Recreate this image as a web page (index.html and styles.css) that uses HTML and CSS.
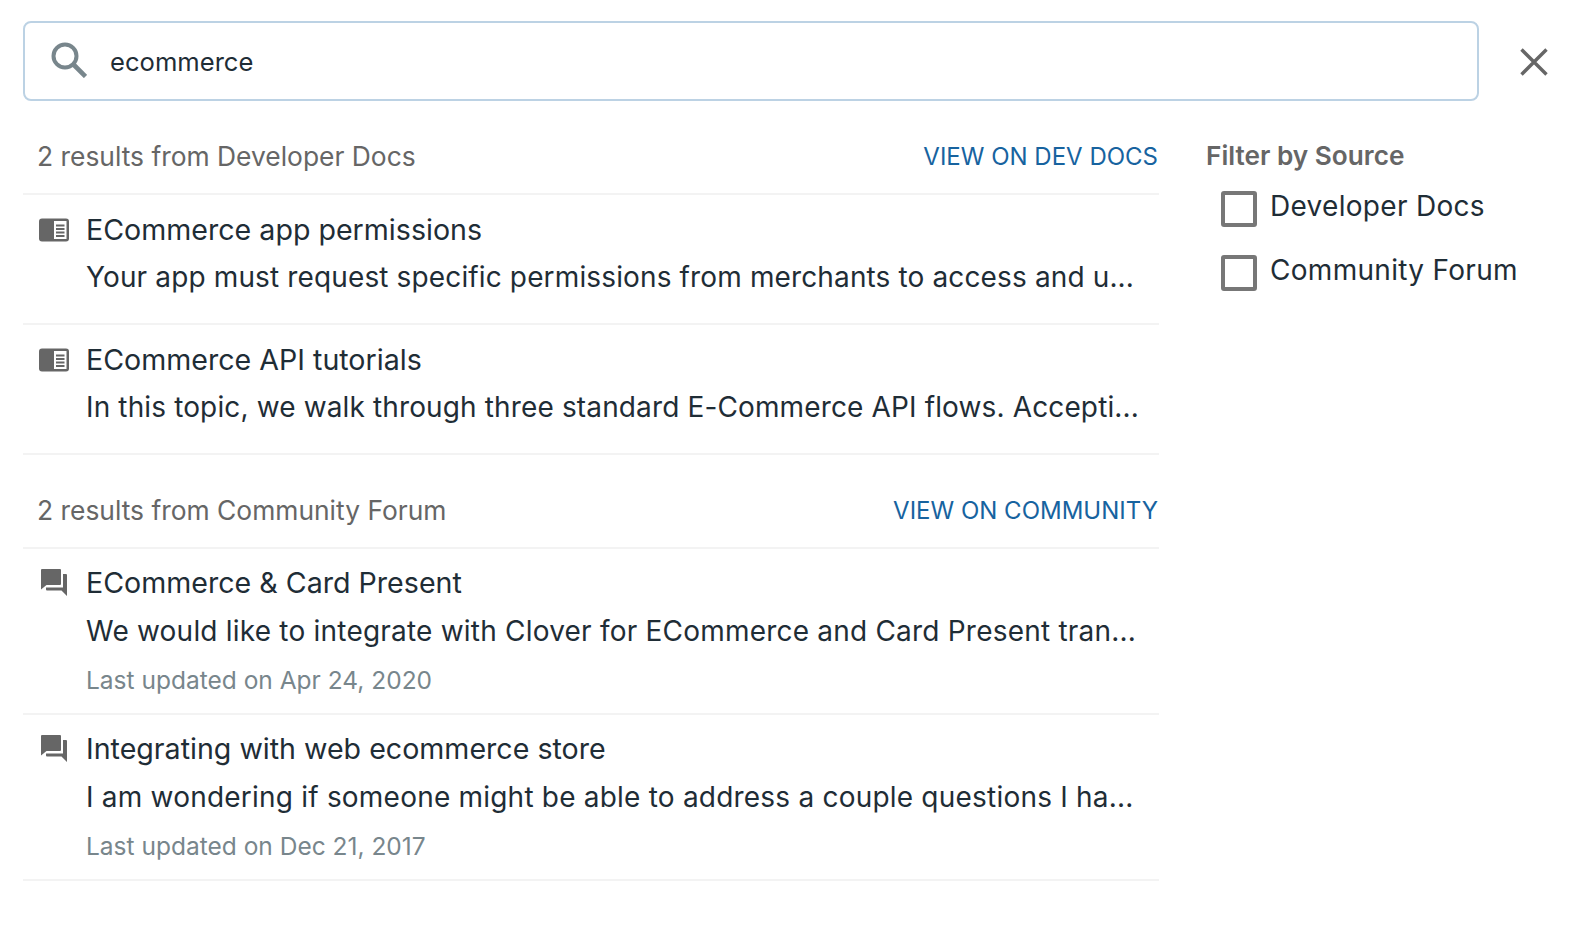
FILE: index.html
```html
<!DOCTYPE html>
<html lang="en">
<head>
<meta charset="utf-8">
<title>Search</title>
<link rel="stylesheet" href="styles.css">
</head>
<body>
<div class="page">
  <div class="top">
    <div class="search">
      <svg class="search-icon" viewBox="0 0 36 36"><circle cx="14" cy="14" r="11.5" fill="none" stroke="#78868c" stroke-width="4"/><path d="M22.5 22.5 L34.5 34.5" stroke="#78868c" stroke-width="4.6" fill="none"/></svg>
      <span class="query">ecommerce</span>
    </div>
    <svg class="close" viewBox="0 0 28 28"><path d="M1.5 1.5 L26.5 26.5 M26.5 1.5 L1.5 26.5" stroke="#666" stroke-width="3.4" fill="none"/></svg>
  </div>
  <div class="content">
    <main class="results">
      <section class="group">
        <header class="group-head"><span class="count">2 results from Developer Docs</span><a class="view">VIEW ON DEV DOCS</a></header>
        <article class="row doc">
          <svg class="icon" viewBox="0 0 30 24"><rect width="30" height="23" y="0.5" rx="3" fill="#666"/><rect x="15" y="3" width="12.5" height="18" fill="#fff"/><path d="M17 7.5h8.5M17 11h8.5M17 14.5h8.5M17 18h8.5" stroke="#666" stroke-width="1.8"/></svg>
          <div class="body"><h3 class="title">ECommerce app permissions</h3><p class="desc">Your app must request specific permissions from merchants to access and u...</p></div>
        </article>
        <article class="row doc">
          <svg class="icon" viewBox="0 0 30 24"><rect width="30" height="23" y="0.5" rx="3" fill="#666"/><rect x="15" y="3" width="12.5" height="18" fill="#fff"/><path d="M17 7.5h8.5M17 11h8.5M17 14.5h8.5M17 18h8.5" stroke="#666" stroke-width="1.8"/></svg>
          <div class="body"><h3 class="title">ECommerce API tutorials</h3><p class="desc">In this topic, we walk through three standard E-Commerce API flows. Accepti...</p></div>
        </article>
      </section>
      <section class="group">
        <header class="group-head"><span class="count">2 results from Community Forum</span><a class="view">VIEW ON COMMUNITY</a></header>
        <article class="row forum">
          <svg class="icon" viewBox="0 0 28 28"><path d="M1 1a1 1 0 0 1 1-1h18a1 1 0 0 1 1 1v14a1 1 0 0 1-1 1H6.5L1 20.5z" fill="#666"/><path d="M6 18.5h17V5h3a1 1 0 0 1 1 1v21l-5.5-5.5H7a1 1 0 0 1-1-1z" fill="#666"/></svg>
          <div class="body"><h3 class="title">ECommerce &amp; Card Present</h3><p class="desc">We would like to integrate with Clover for ECommerce and Card Present tran...</p><p class="date">Last updated on Apr 24, 2020</p></div>
        </article>
        <article class="row forum">
          <svg class="icon" viewBox="0 0 28 28"><path d="M1 1a1 1 0 0 1 1-1h18a1 1 0 0 1 1 1v14a1 1 0 0 1-1 1H6.5L1 20.5z" fill="#666"/><path d="M6 18.5h17V5h3a1 1 0 0 1 1 1v21l-5.5-5.5H7a1 1 0 0 1-1-1z" fill="#666"/></svg>
          <div class="body"><h3 class="title">Integrating with web ecommerce store</h3><p class="desc">I am wondering if someone might be able to address a couple questions I ha...</p><p class="date">Last updated on Dec 21, 2017</p></div>
        </article>
      </section>
    </main>
    <aside class="filters">
      <h4 class="filter-title">Filter by Source</h4>
      <label class="check"><span class="box"></span><span class="check-label">Developer Docs</span></label>
      <label class="check"><span class="box"></span><span class="check-label">Community Forum</span></label>
    </aside>
  </div>
</div>
</body>
</html>
```
FILE: styles.css
```css
* { box-sizing: border-box; }
html, body { margin: 0; background: #fff; }
body { font-family: Inter, "Noto Sans", sans-serif; color: #1f2d36; overflow: hidden; }
.page { padding: 21px 28px 0 23px; }
.top { display: flex; align-items: center; justify-content: space-between; }
.search { width: 1456px; height: 80px; border: 2px solid #bcd2e4; border-radius: 8px; display: flex; align-items: center; padding-left: 26px; }
.search-icon { width: 36px; height: 36px; margin-top: -2px; }
.query { font-size: 25.6px; margin: 0 0 0 23px; }
.close { width: 28px; height: 28px; margin-top: 1px; }
.content { display: flex; }
.results { width: 1136px; }
.group-head { height: 94px; border-bottom: 2px solid #f3f3f3; display: flex; justify-content: space-between; align-items: flex-start; padding: 35px 1px 0 14px; line-height: 40px; }
.count { font-size: 26.4px; color: #666; }
.view { font-size: 24px; color: #17639f; margin-top: 1px; }
.row { display: flex; border-bottom: 2px solid #f3f3f3; padding: 15px 0 0 16px; height: 130px; }
.row.forum { height: 166px; padding-top: 14px; }
.icon { width: 30px; height: 24px; margin-top: 8px; flex: none; }
.forum .icon { height: 28px; margin-top: 6px; }
.body { margin-left: 17px; }
.title { margin: 0; font-size: 28.6px; font-weight: 400; line-height: 40px; }
.desc { margin: 7px 0 0; font-size: 28px; letter-spacing: 0.135px; line-height: 40px; white-space: nowrap; }
.forum .desc { margin-top: 8px; letter-spacing: 0.21px; }
.date { margin: 13px 0 0; font-size: 24.5px; line-height: 32px; color: #78868c; }
.filters { margin-left: 47px; padding-top: 35px; }
.filter-title { margin: 0; font-size: 26.2px; font-weight: 600; line-height: 40px; color: #666; }
.check { display: flex; margin: 0 0 28px 15px; }
.filter-title + .check { margin-top: 15px; }
.box { width: 36px; height: 36px; border: 4px solid #777; border-radius: 3px; }
.check-label { font-size: 28px; letter-spacing: 0.3px; line-height: 30px; margin-left: 13px; }
```
